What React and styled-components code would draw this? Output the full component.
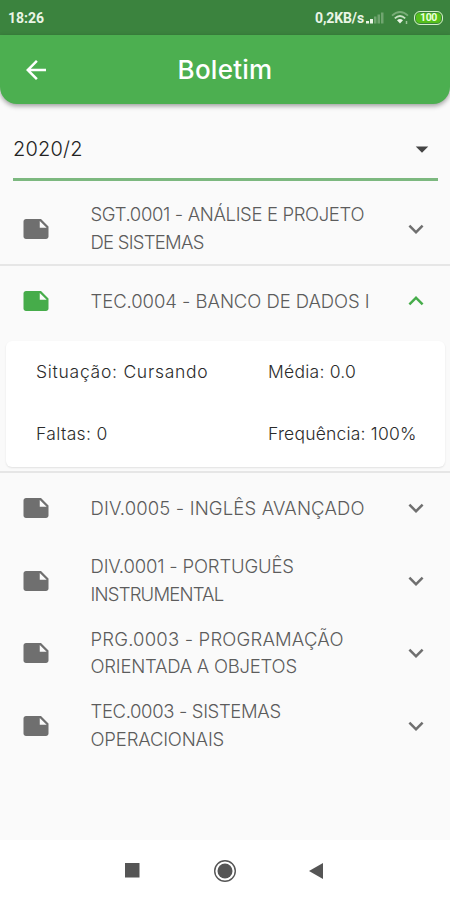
import styled, { createGlobalStyle } from "styled-components";
import { useState } from "react";

const GlobalStyle = createGlobalStyle`
  * {
    box-sizing: border-box;
  }
  body {
    margin: 0;
    background-color: #fafafa;
    font-family: "Inter", "Liberation Sans", sans-serif;
  }
`;

const Container = styled.div`
  width: 450px;
  height: 900px;
  display: flex;
  flex-direction: column;
  overflow: hidden;
  background-color: #fafafa;
`;

const StatusBar = styled.div`
  height: 35px;
  flex-shrink: 0;
  padding: 0 7px 0 8px;
  display: flex;
  align-items: center;
  justify-content: space-between;
  background-color: #3b833e;
  color: #eaf5e6;
  font-family: Roboto, sans-serif;
  font-size: 14px;
  font-weight: 700;
`;

const StatusText = styled.span`
  letter-spacing: ${(props) => props.$tracking || 0}px;
  white-space: nowrap;
`;

const StatusIcons = styled.div`
  display: flex;
  align-items: center;
`;

const Header = styled.header`
  height: 69px;
  flex-shrink: 0;
  display: grid;
  grid-template-columns: 71px 1fr 71px;
  align-items: center;
  background-color: #4caf50;
  border-radius: 0 0 17px 17px;
  box-shadow: 0 2px 5px rgba(0, 0, 0, 0.38);
`;

const IconButton = styled.button`
  border: none;
  padding: 0;
  background: none;
  display: flex;
  justify-content: center;
  color: white;
  cursor: pointer;
`;

const Title = styled.h1`
  margin: 0;
  text-align: center;
  color: white;
  font-size: 26px;
  font-weight: 500;
  letter-spacing: ${(props) => props.$tracking || 0}px;
`;

const Select = styled.div`
  height: 77px;
  flex-shrink: 0;
  margin: 0 12px 0 13px;
  padding: 15px 1px 0 0;
  display: flex;
  align-items: center;
  justify-content: space-between;
  border-bottom: 3px solid #7cb87f;
  color: #222;
  font-size: 20px;
  font-weight: 300;

  svg {
    color: #444;
  }
`;

const List = styled.main`
  flex: 1;
  padding-top: 12.5px;
`;

const Item = styled.section`
  border-bottom: 2px solid ${(props) => (props.$divider ? "#e6e6e6" : "transparent")};
`;

const Row = styled.div`
  height: 70.5px;
  padding: 0 19.5px 0 20.5px;
  display: grid;
  grid-template-columns: 70px 1fr 30px;
  align-items: center;
  color: ${(props) => (props.$open ? "#46ac4a" : "#6f6f6f")};
  cursor: pointer;
`;

const Name = styled.div`
  color: #5c5c5c;
  font-size: 18.5px;
  font-weight: 300;
  line-height: 27.5px;
`;

const Line = styled.span`
  display: block;
  white-space: nowrap;
`;

const Text = styled.span`
  letter-spacing: ${(props) => props.$tracking || 0}px;
`;

const Card = styled.div`
  height: 126px;
  margin: 4px 5px 4.5px 6px;
  padding: 0 0 0 30px;
  display: grid;
  grid-template-columns: 232px 1fr;
  grid-template-rows: 62px 62px;
  align-items: center;
  background-color: white;
  border-radius: 6px;
  box-shadow: 0 1px 2px rgba(0, 0, 0, 0.1);
  color: #2b2b2b;
  font-size: 17.5px;
  font-weight: 300;
  white-space: nowrap;
`;

const NavBar = styled.nav`
  height: 60px;
  flex-shrink: 0;
  padding: 2px 40px 0;
  display: flex;
  align-items: center;
  justify-content: center;
  gap: 68px;
  background-color: white;
`;

const Glyph = ({ d, size = 30 }) => (
  <svg width={size} height={size} viewBox="0 0 24 24" fill="currentColor">
    <path d={d} />
  </svg>
);

const icons = {
  back: "M20 11H7.83l5.59-5.59L12 4l-8 8 8 8 1.41-1.41L7.83 13H20v-2z",
  note: "M22 10l-6-6H4c-1.1 0-2 .9-2 2v12.01c0 1.1.9 1.99 2 1.99l16-.01c1.1 0 2-.89 2-2v-8zm-7-4.5l5.5 5.5H15V5.5z",
  down: "M16.59 8.59L12 13.17 7.41 8.59 6 10l6 6 6-6z",
  up: "M12 8l-6 6 1.41 1.41L12 10.83l4.59 4.58L18 14z",
  drop: "M7 10l5 5 5-5z",
};

const Signal = styled(({ className }) => (
  <svg className={className} width="18" height="14" viewBox="0 0 18 14" fill="#eaf5e6">
    <rect x="0" y="10" width="3" height="2.5" />
    <rect x="4" y="8" width="3" height="4.5" />
    <rect x="8" y="5.5" width="2.5" height="7" opacity=".3" />
    <rect x="11.5" y="3.5" width="2.5" height="9" opacity=".3" />
    <rect x="15" y="1.5" width="2.5" height="11" opacity=".3" />
  </svg>
))`
  margin: 0 7px 0 2px;
`;

const Wifi = () => (
  <svg width="18" height="14" viewBox="0 0 18 14" fill="none" strokeWidth="1.8">
    <path d="M1 4.6Q9-2.6 17 4.6" stroke="#79ad78" />
    <path d="M3.8 7.4Q9 2.6 14.2 7.4" stroke="#c9e3c5" />
    <path d="M6 9.3Q9 6.8 12 9.3L9 12.5z" fill="#eaf5e6" />
    <path d="M15.5 10v3" stroke="#9cc59b" strokeWidth="1.5" />
  </svg>
);

const Battery = styled.div`
  width: 29px;
  height: 14px;
  margin-left: 5px;
  border: 1.5px solid #d6efce;
  border-radius: 6px;
  display: flex;
  align-items: center;
  justify-content: center;
  background-color: #55bf1b;
  box-shadow: inset 0 0 0 1px #3b833e;
  color: #eaffdf;
  font-size: 10.5px;
  letter-spacing: -0.3px;
`;

// each line of a name carries its own letter spacing
const courses = [
  { id: "SGT.0001", lines: [["SGT.0001 - ANÁLISE E PROJETO", -0.36], ["DE SISTEMAS", -0.75]], divider: true },
  { id: "TEC.0004", lines: [["TEC.0004 - BANCO DE DADOS I", -0.06]], divider: true },
  { id: "DIV.0005", lines: [["DIV.0005 - INGLÊS AVANÇADO", 0.14]] },
  { id: "DIV.0001", lines: [["DIV.0001 - PORTUGUÊS", -0.17], ["INSTRUMENTAL", -0.8]] },
  { id: "PRG.0003", lines: [["PRG.0003 - PROGRAMAÇÃO", 0.18], ["ORIENTADA A OBJETOS", -0.24]] },
  { id: "TEC.0003", lines: [["TEC.0003 - SISTEMAS", -0.36], ["OPERACIONAIS", -0.18]] },
];

const App = () => {
  const [open, setOpen] = useState("TEC.0004");

  return (
    <Container>
      <GlobalStyle />
      <StatusBar>
        <StatusText>18:26</StatusText>
        <StatusIcons>
          <StatusText $tracking={-0.1}>0,2KB/s</StatusText>
          <Signal />
          <Wifi />
          <Battery>100</Battery>
        </StatusIcons>
      </StatusBar>
      <Header>
        <IconButton aria-label="Voltar">
          <Glyph d={icons.back} />
        </IconButton>
        <Title $tracking={0.25}>Boletim</Title>
      </Header>
      <Select>
        <Text $tracking={0.2}>2020/2</Text>
        <Glyph d={icons.drop} />
      </Select>
      <List>
        {courses.map((course) => (
          <Item key={course.id} $divider={course.divider}>
            <Row
              $open={open === course.id}
              onClick={() => setOpen(open === course.id ? null : course.id)}
            >
              <Glyph d={icons.note} />
              <Name>
                {course.lines.map(([text, tracking]) => (
                  <Line key={text}>
                    <Text $tracking={tracking}>{text}</Text>
                  </Line>
                ))}
              </Name>
              <Glyph d={open === course.id ? icons.up : icons.down} />
            </Row>
            {open === course.id && (
              <Card>
                <Text $tracking={0.73}>Situação: Cursando</Text>
                <Text $tracking={0.25}>Média: 0.0</Text>
                <Text $tracking={0.35}>Faltas: 0</Text>
                <Text $tracking={0.2}>Frequência: 100%</Text>
              </Card>
            )}
          </Item>
        ))}
      </List>
      <NavBar>
        <svg width="24" height="24" fill="#555">
          <rect x="4" y="4" width="14.5" height="14.5" />
        </svg>
        <svg width="24" height="24" fill="#555">
          <circle cx="12" cy="12" r="7.5" />
          <circle cx="12" cy="12" r="10.3" fill="none" stroke="#555" strokeWidth="1.4" />
        </svg>
        <svg width="24" height="24" fill="#555">
          <path d="M4 12L18 4v16z" />
        </svg>
      </NavBar>
    </Container>
  );
};

export default App;
